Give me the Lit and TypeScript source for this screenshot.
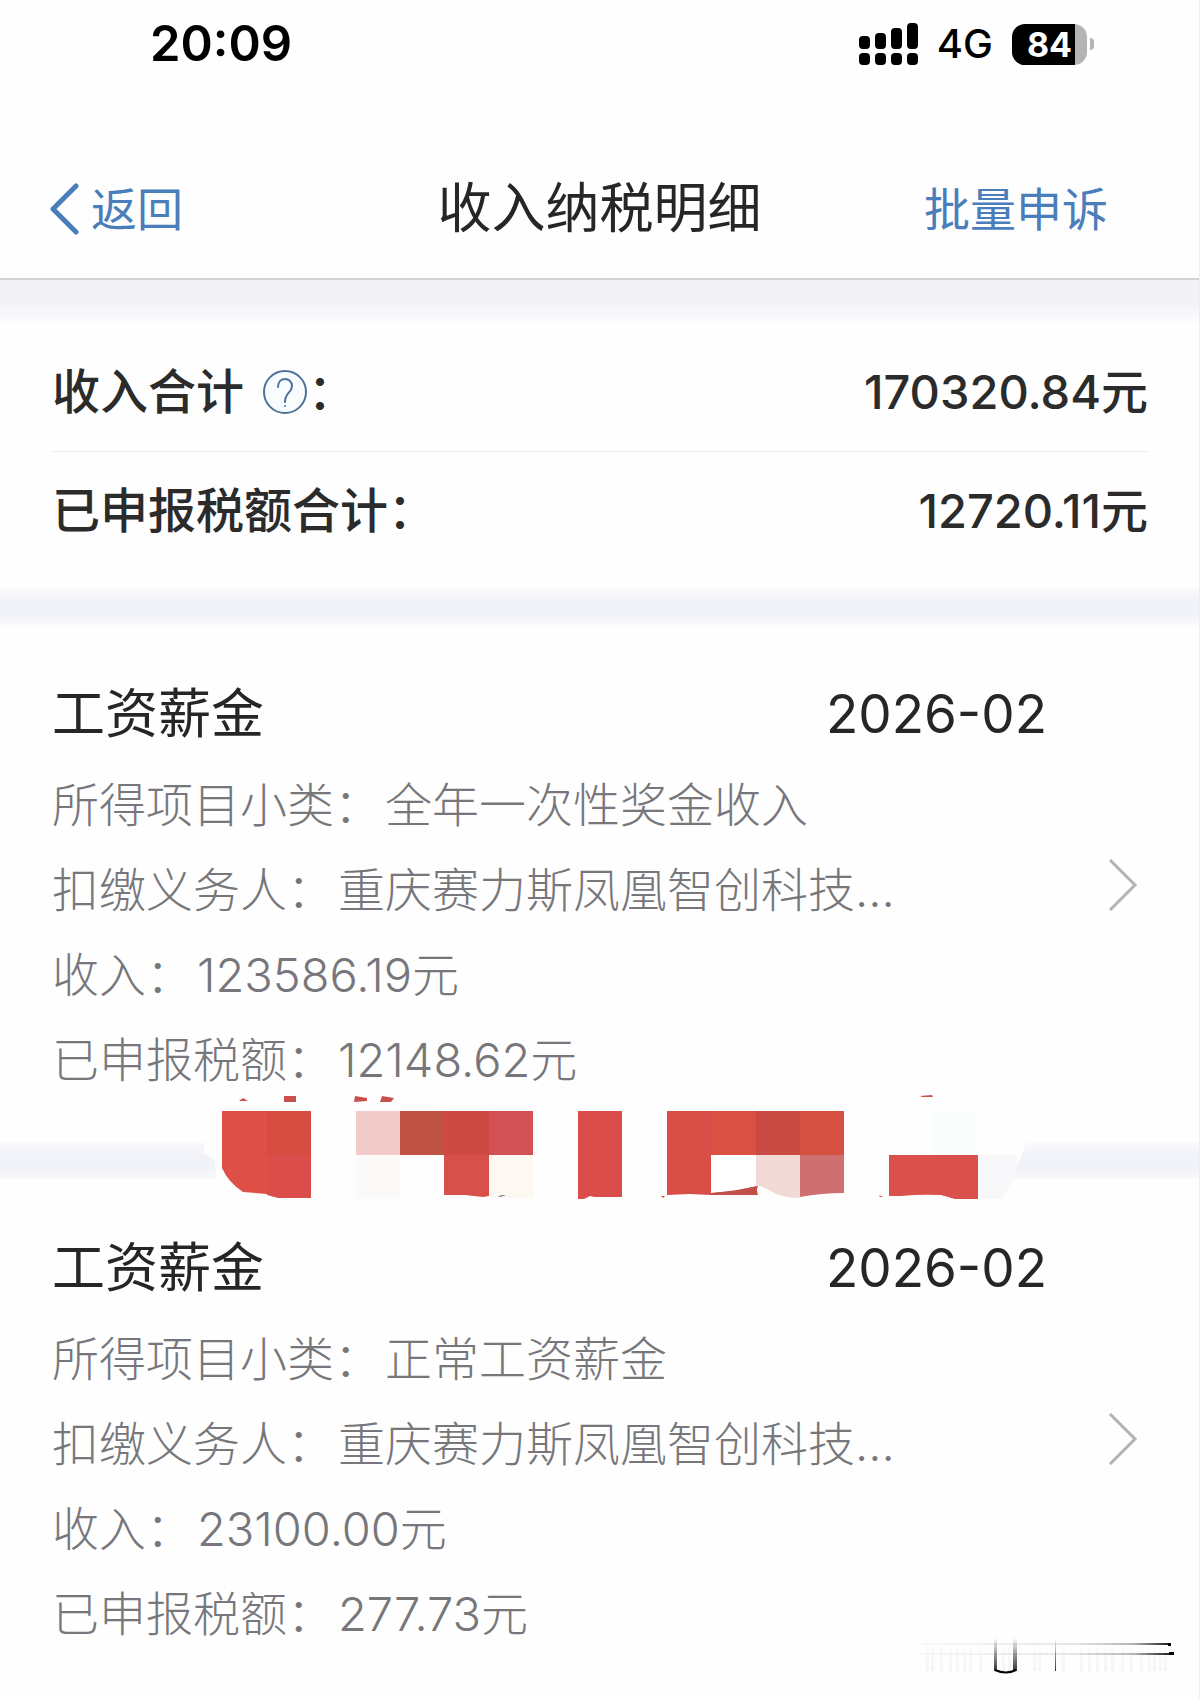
import { LitElement, html, svg, css } from "lit";
import { customElement, property } from "lit/decorators.js";

interface IncomeRecord {
  title: string;
  period: string;
  details: [string, string][];
}

const RECORDS: IncomeRecord[] = [
  {
    title: "工资薪金",
    period: "2026-02",
    details: [
      ["所得项目小类：", "全年一次性奖金收入"],
      ["扣缴义务人：", "重庆赛力斯凤凰智创科技..."],
      ["收入：", "123586.19元"],
      ["已申报税额：", "12148.62元"],
    ],
  },
  {
    title: "工资薪金",
    period: "2026-02",
    details: [
      ["所得项目小类：", "正常工资薪金"],
      ["扣缴义务人：", "重庆赛力斯凤凰智创科技..."],
      ["收入：", "23100.00元"],
      ["已申报税额：", "277.73元"],
    ],
  },
];

@customElement("status-bar")
export class StatusBar extends LitElement {
  static styles = css`
    :host {
      display: block;
    }
    .bar {
      display: flex;
      align-items: center;
      justify-content: space-between;
      padding: 14px 105px 60px 150px;
      line-height: 60px;
      color: #000;
    }
    .time {
      font-size: 49px;
      font-weight: 600;
    }
    .right {
      display: flex;
      align-items: center;
      gap: 19px;
    }
    .network {
      font-size: 40px;
      font-weight: 500;
    }
    .battery {
      display: flex;
      align-items: center;
      gap: 3px;
    }
    .cell {
      display: flex;
      justify-content: center;
      width: 75px;
      border-radius: 13px;
      background: linear-gradient(to right, #000 84%, #b4b4b4 84%);
      color: #fff;
      font-size: 34px;
      font-weight: 700;
      line-height: 41px;
    }
    .tip {
      width: 4px;
      height: 12px;
      border-radius: 0 4px 4px 0;
      background: #b4b4b4;
    }
    svg {
      display: block;
    }
  `;

  render() {
    return html`
      <div class="bar">
        <span class="time">20:09</span>
        <div class="right">
          <svg width="59" height="42" viewBox="0 0 59 42" aria-hidden="true">
            <rect x="0" y="13" width="11" height="13" rx="4" />
            <rect x="16" y="10" width="11" height="16" rx="4" />
            <rect x="32" y="5" width="11" height="21" rx="4" />
            <rect x="48" y="0" width="11" height="26" rx="4" />
            <rect x="0" y="30" width="11" height="12" rx="4" />
            <rect x="16" y="30" width="11" height="12" rx="4" />
            <rect x="32" y="30" width="11" height="12" rx="4" />
            <rect x="48" y="30" width="11" height="12" rx="4" />
          </svg>
          <span class="network">4G</span>
          <div class="battery">
            <span class="cell">84</span>
            <span class="tip"></span>
          </div>
        </div>
      </div>
    `;
  }
}

@customElement("record-card")
export class RecordCard extends LitElement {
  @property({ attribute: false }) record!: IncomeRecord;

  static styles = css`
    :host {
      display: block;
    }
    .card {
      display: grid;
      grid-template-columns: 1fr auto;
      align-items: center;
      padding: 59px 61px 40px 52px;
    }
    .head {
      display: flex;
      justify-content: space-between;
      margin-right: 61px;
      color: #262626;
      font-size: 53px;
      line-height: 60px;
    }
    .title {
      margin: 0;
      font-size: 53px;
      font-weight: 400;
    }
    .details {
      margin: 18px 0 0;
      color: #77777b;
      font-size: 47px;
      font-weight: 300;
      line-height: 85px;
    }
    .line {
      display: flex;
      gap: 4px;
      white-space: nowrap;
    }
    .line dd {
      margin: 0;
    }
    .open {
      display: block;
      padding: 0 0 16px;
      border: 0;
      background: none;
      cursor: pointer;
    }
    .open svg {
      display: block;
    }
  `;

  render() {
    const { title, period, details } = this.record;
    return html`
      <article class="card">
        <div>
          <div class="head">
            <h2 class="title">${title}</h2>
            <time datetime=${period}>${period}</time>
          </div>
          <dl class="details">
            ${details.map(
              ([name, value]) => html`<div class="line"><dt>${name}</dt><dd>${value}</dd></div>`,
            )}
          </dl>
        </div>
        <button class="open" type="button" aria-label="${title}">
          <svg width="30" height="52" viewBox="0 0 30 52" fill="none" stroke="#b3b3b5" stroke-width="3">
            <path d="M2 1 27 26 2 51" />
          </svg>
        </button>
      </article>
    `;
  }
}

@customElement("app-root")
export class AppRoot extends LitElement {
  static styles = css`
    :host {
      display: block;
      font-family: Inter, "Noto Sans CJK SC", sans-serif;
    }
    .page {
      position: relative;
      box-sizing: border-box;
      min-height: 100vh;
      overflow: hidden;
      border-right: 1px solid #ececf2;
      background: #fefefe;
    }
    .nav {
      display: grid;
      grid-template-columns: 1fr auto 1fr;
      align-items: center;
      padding: 45px 49px 39px;
      border-bottom: 2px solid #d3d3d7;
      line-height: 60px;
    }
    .title {
      margin: 0;
      color: #262626;
      font-size: 54px;
      font-weight: 400;
    }
    .link {
      display: flex;
      align-items: center;
      gap: 12px;
      padding: 0;
      border: 0;
      background: none;
      color: #4a7ebb;
      font: inherit;
      font-size: 46px;
      cursor: pointer;
    }
    .link svg {
      display: block;
    }
    .action {
      justify-self: end;
      margin-right: 42px;
    }
    .band {
      height: 37px;
      background: linear-gradient(#fafafd, #f2f3f9 35%, #f2f3f9 75%, #fafafd);
    }
    .band-top {
      height: 43px;
      background: linear-gradient(#f2f2f7 50%, #fcfcfe);
    }
    .summary {
      margin: 0;
      padding: 10px 51px 18px 52px;
      color: #2b2b2b;
      font-size: 47px;
      font-weight: 500;
      line-height: 118px;
    }
    .row {
      display: flex;
      justify-content: space-between;
    }
    .row + .row {
      border-top: 1px solid #ebebed;
    }
    .row dt {
      display: flex;
      align-items: center;
      font-size: 48px;
    }
    .row dd {
      margin: 0;
    }
    .help {
      display: block;
      margin-left: 18px;
      padding: 0;
      border: 0;
      background: none;
      cursor: pointer;
    }
    .help svg {
      display: block;
    }
    .sticker {
      position: absolute;
      top: 1090px;
      left: 200px;
    }
    .smear {
      position: absolute;
      right: 20px;
      bottom: 20px;
    }
  `;

  private sticker() {
    return svg`
      <svg class="sticker" width="840" height="116" viewBox="200 1090 840 116" aria-hidden="true">
        <path fill="#fefefe" d="M203 1125H1034L1015 1170Q1008 1200 990 1202H240Q215 1195 215 1160L204 1153Z" />
        <path fill="#f8f8fb" d="M978 1155H1018L1013 1180 1002 1199H978Z" />
        <g fill="#c9504d">
          <path d="M239 1101 243 1098 248 1101Z" />
          <path d="M284 1096H296V1102H284Z" />
          <path d="M355 1096 367 1098V1101L354 1102Z" />
          <path d="M382 1096 394 1098 391 1102H380Z" />
          <path d="M920 1096 932 1095 933 1097H922Z" />
          <path d="M661 1196H665L663 1198Z" />
          <path d="M879 1195 883 1197H880Z" />
        </g>
        <path fill="#dd4f47" d="M222 1111H267V1194Q256 1193 243 1192Q228 1182 222 1168Z" />
        <path fill="#d54d41" d="M267 1111H311V1155H267Z" />
        <path fill="#da4d4a" d="M267 1155H311V1198H278L267 1195Z" />
        <path fill="#f1caca" d="M356 1111H400V1155H356Z" />
        <path fill="#c05244" d="M400 1111H444V1155H400Z" />
        <path fill="#cc4a41" d="M444 1111H489V1155H444Z" />
        <path fill="#d15156" d="M489 1111H533V1155H489Z" />
        <path fill="#fbfaf9" d="M356 1155H400V1199H356Z" />
        <path fill="#d7504a" d="M444 1155H489V1196L483 1197 465 1195H444Z" />
        <path fill="#fdf8f2" d="M489 1155H533V1198H489Z" />
        <path fill="#777" d="M498 1196 503 1195H506L500 1197Z" />
        <path fill="#da4d4b" d="M578 1111H622V1197H594L590 1196 584 1199H578Z" />
        <path fill="#da4e48" d="M667 1111H711V1193L756 1186 758 1195H711L690 1194 667 1195Z" />
        <path fill="#da5144" d="M711 1111H756V1155H711Z" />
        <path fill="#c84a43" d="M756 1111H800V1155H756Z" />
        <path fill="#d55040" d="M800 1111H844V1155H800Z" />
        <path fill="#fff" d="M711 1155H756V1186L735 1191 711 1193Z" />
        <path fill="#c04f4a" d="M711 1193Q736 1191 758 1186L755 1195H711Z" />
        <path fill="#f1dad6" d="M756 1155H800V1198Q780 1198 767 1189L760 1186H756Z" />
        <path fill="#cf7070" d="M800 1155H844V1193Q822 1193 800 1197Z" />
        <path fill="#f9fdfc" d="M933 1111H977V1155H933Z" />
        <path fill="#da504b" d="M889 1155H978V1199H955L941 1195Q920 1194 901 1196H889Z" />
      </svg>
    `;
  }

  private smear() {
    const streaks = [
      926, 931, 940, 949, 956, 963, 969, 979, 1002, 1008, 1033, 1038, 1062, 1080, 1088, 1096,
      1104, 1111, 1121, 1130, 1140, 1148, 1153, 1159, 1164,
    ];
    return svg`
      <svg class="smear" width="260" height="50" viewBox="919 1628 260 50" aria-hidden="true">
        <defs>
          <linearGradient id="fade-x" x1="0" x2="1" y1="0" y2="0">
            <stop offset="0" stop-color="#000" stop-opacity="0.02" />
            <stop offset="0.6" stop-color="#000" stop-opacity="0.09" />
            <stop offset="0.85" stop-color="#000" stop-opacity="0.28" />
            <stop offset="1" stop-color="#000" stop-opacity="0.9" />
          </linearGradient>
          <linearGradient id="fade-y" x1="0" x2="0" y1="0" y2="1">
            <stop offset="0" stop-color="#000" stop-opacity="0" />
            <stop offset="1" stop-color="#000" stop-opacity="0.8" />
          </linearGradient>
          <linearGradient id="fade-soft" x1="0" x2="0" y1="0" y2="1">
            <stop offset="0" stop-color="#000" stop-opacity="0" />
            <stop offset="1" stop-color="#000" stop-opacity="0.04" />
          </linearGradient>
        </defs>
        ${streaks.map((x) => svg`<rect x=${x} y="1640" width="3" height="31" fill="url(#fade-soft)" />`)}
        <rect x="921" y="1643" width="249" height="2" fill="url(#fade-x)" />
        <rect x="921" y="1653" width="250" height="2" fill="url(#fade-x)" />
        <rect x="1168" y="1643" width="3" height="3" />
        <rect x="1169" y="1652" width="5" height="3" />
        <rect x="994" y="1638" width="3" height="33" fill="url(#fade-y)" />
        <rect x="1013" y="1638" width="4" height="33" fill="url(#fade-y)" />
        <rect x="1055" y="1638" width="1" height="33" fill="url(#fade-y)" />
        <path d="M995 1670Q1006 1675 1016 1670" fill="none" stroke="#000" stroke-width="2" />
      </svg>
    `;
  }

  render() {
    return html`
      <main class="page">
        <status-bar></status-bar>
        <header class="nav">
          <button class="link" type="button">
            <svg width="30" height="52" viewBox="0 0 30 52" fill="none" stroke="#4a7ebb" stroke-width="5"
              stroke-linecap="round" stroke-linejoin="round">
              <path d="M27 3 4 26 27 49" />
            </svg>
            返回
          </button>
          <h1 class="title">收入纳税明细</h1>
          <button class="link action" type="button">批量申诉</button>
        </header>
        <div class="band band-top"></div>
        <dl class="summary">
          <div class="row">
            <dt>
              收入合计
              <button class="help" type="button" aria-label="说明">
                <svg width="46" height="46" viewBox="0 0 46 46" fill="none" stroke="#4d7299" stroke-width="2">
                  <circle cx="23" cy="23" r="21" fill="#f8fcff" />
                  <path d="M16 18C16 7 30 8 30 17C30 24 23 23 23 33" stroke-linecap="round" />
                  <circle cx="23" cy="37" r="1" fill="#4d7299" stroke="none" />
                </svg>
              </button>：
            </dt>
            <dd>170320.84元</dd>
          </div>
          <div class="row">
            <dt>已申报税额合计：</dt>
            <dd>12720.11元</dd>
          </div>
        </dl>
        ${RECORDS.map(
          (record) => html`
            <div class="band"></div>
            <record-card .record=${record}></record-card>
          `,
        )}
        ${this.sticker()} ${this.smear()}
      </main>
    `;
  }
}
